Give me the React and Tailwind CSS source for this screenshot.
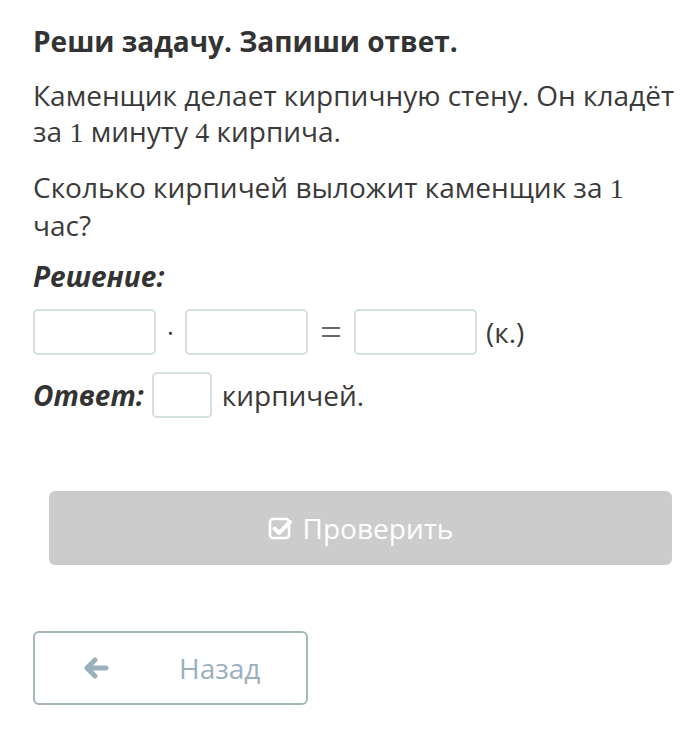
import React from "react";

const Num = ({ children }) => (
  <span className="font-['Liberation_Serif',serif]">{children}</span>
);

const Box = ({ className = "" }) => (
  <div className={`h-[46px] rounded-[5px] border-2 border-[#d3dfe0] bg-white ${className}`} />
);

const CheckIcon = () => (
  <svg width="26" height="24" viewBox="0 0 26 24" fill="none">
    <rect x="2" y="3" width="19" height="19" rx="3" stroke="white" strokeWidth="2.6" />
    <path d="M6.5 12.5l4.5 4.5 11-11" stroke="white" strokeWidth="4" strokeLinecap="round" strokeLinejoin="round" />
  </svg>
);

const ArrowIcon = () => (
  <svg width="26" height="22" viewBox="0 0 26 22" fill="none">
    <path d="M23 11H4M12 3l-8 8 8 8" stroke="#9ab0bd" strokeWidth="5" strokeLinecap="round" strokeLinejoin="round" />
  </svg>
);

const App = () => {
  return (
    <div className="min-h-[743px] w-[693px] bg-white font-['Open_Sans',sans-serif] text-[#3a3a3a]">
      <div className="pl-[33px] pr-[8px] pt-[23px]">
        <h1 className="text-[28px] font-bold leading-[36px] text-[#333]">
          Реши задачу. Запиши ответ.
        </h1>

        <p className="mt-[18px] text-[28px] leading-[36px]">
          Каменщик делает кирпичную стену. Он кладёт за <Num>1</Num> минуту{" "}
          <Num>4</Num> кирпича.
        </p>

        <p className="mt-[18px] pr-[40px] text-[28px] leading-[37px]">
          Сколько кирпичей выложит каменщик за <Num>1</Num> час?
        </p>

        <div className="mt-[14px] text-[28px] font-bold italic leading-[36px] text-[#333]">
          Решение:
        </div>

        <div className="mt-[15px] flex items-center">
          <Box className="w-[123px]" />
          <span className="w-[29px] text-center text-[26px] leading-none">·</span>
          <Box className="w-[123px]" />
          <span className="w-[46px] text-center font-['Liberation_Serif',serif] text-[38px] font-light leading-none text-[#666]">
            =
          </span>
          <Box className="w-[123px]" />
          <span className="ml-[9px] text-[28px] leading-none">(к.)</span>
        </div>

        <div className="mt-[17px] flex items-center">
          <span className="text-[28px] font-bold italic leading-none text-[#333]">
            Ответ:
          </span>
          <Box className="ml-[8px] w-[60px]" />
          <span className="ml-[10px] text-[28px] leading-none">кирпичей.</span>
        </div>

        <div className="ml-[16px] mt-[73px] flex h-[74px] w-[623px] items-center justify-center gap-[9px] rounded-[6px] bg-[#cccccc] text-white">
          <CheckIcon />
          <span className="text-[28px] leading-none">Проверить</span>
        </div>

        <div className="mt-[66px] flex h-[74px] w-[275px] items-center rounded-[6px] border-2 border-[#a7b6bb] bg-white text-[#9ab0bd]">
          <span className="ml-[48px] flex">
            <ArrowIcon />
          </span>
          <span className="ml-[70px] text-[28px] leading-none">Назад</span>
        </div>
      </div>
    </div>
  );
};

export default App;
